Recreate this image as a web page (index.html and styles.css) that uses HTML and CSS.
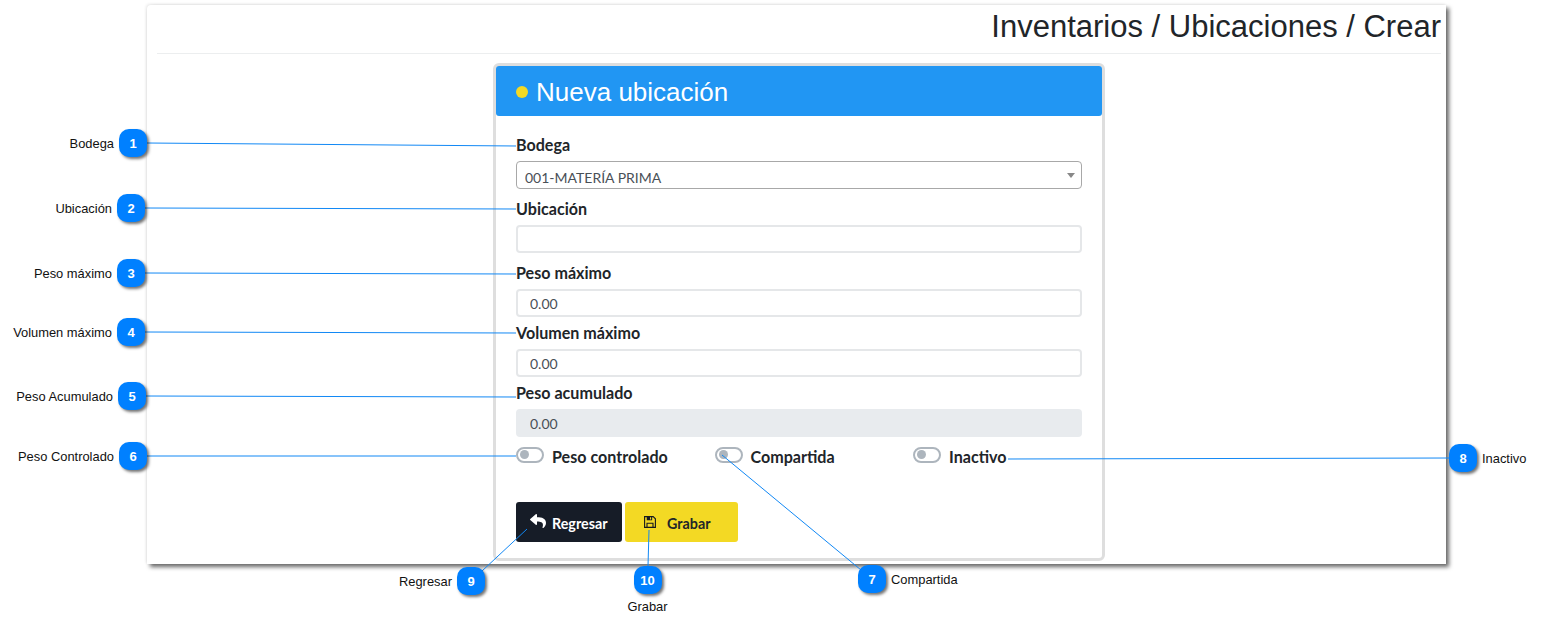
FILE: index.html
```html
<!DOCTYPE html>
<html lang="es">
<head>
<meta charset="utf-8">
<title>Inventarios / Ubicaciones / Crear</title>
<link rel="stylesheet" href="styles.css">
</head>
<body>
<main class="shot">
  <h1 class="page-title">Inventarios / Ubicaciones / Crear</h1>
  <hr class="rule">
  <form class="card">
    <header class="card-head"><span class="dot"></span><h2>Nueva ubicación</h2></header>
    <div class="card-body">
      <div class="field wide">
        <label>Bodega</label>
        <div class="select-wrap"><select><option>001-MATERÍA PRIMA</option></select></div>
      </div>
      <div class="field wide">
        <label>Ubicación</label>
        <input type="text">
      </div>
      <div class="field">
        <label>Peso máximo</label>
        <input type="text" value="0.00">
      </div>
      <div class="field">
        <label>Volumen máximo</label>
        <input type="text" value="0.00">
      </div>
      <div class="field">
        <label>Peso acumulado</label>
        <input type="text" value="0.00" disabled>
      </div>
      <div class="toggles">
        <div class="toggle"><span class="switch"></span><span>Peso controlado</span></div>
        <div class="toggle"><span class="switch"></span><span>Compartida</span></div>
        <div class="toggle"><span class="switch"></span><span>Inactivo</span></div>
      </div>
      <div class="actions">
        <button type="button" class="btn btn-dark">
          <svg class="ico-reply" viewBox="0 0 512 512"><path fill="#fff" d="M8.3 189.8 184.3 37.8C199.7 24.5 224 35.3 224 56v80.1c160.6 1.8 288 34 288 186.3 0 61.5-39.6 122.4-83.4 154.2-13.7 9.9-33.1-2.5-28.1-18.6 45.4-145.2-21.5-183.7-176.5-186V360c0 20.7-24.3 31.500-39.700 18.200L8.300 226.200c-11.100-9.600-11.100-26.800 0-36.400z"/></svg>
          Regresar
        </button>
        <button type="button" class="btn btn-yellow">
          <svg class="ico-save" viewBox="0 0 14 14"><path fill="none" stroke="#16191f" stroke-width="1.300" d="M.7.7h10l2.600 2.600v10H.7z"/><path fill="none" stroke="#16191f" stroke-width="1.300" d="M3.500 13.300V8.500h7v4.800"/><path fill="#16191f" d="M3.200.7h6.300v4.300H3.200z"/><path fill="#f3d924" d="M7 1.600h1.300v2.500H7z"/></svg>
          Grabar
        </button>
      </div>
    </div>
  </form>
</main>

<svg class="leaders" viewBox="0 0 1541 631">
  <line x1="147" y1="143" x2="516" y2="146"/>
  <line x1="145" y1="208" x2="516" y2="209"/>
  <line x1="145" y1="273" x2="516" y2="274"/>
  <line x1="145" y1="332" x2="516" y2="333"/>
  <line x1="146" y1="396" x2="516" y2="397"/>
  <line x1="147" y1="456" x2="516" y2="456"/>
  <line x1="722" y1="455" x2="861" y2="570"/>
  <line x1="1008" y1="459" x2="1449" y2="458"/>
  <line x1="527" y1="529" x2="482" y2="571"/>
  <line x1="649" y1="530" x2="648" y2="566"/>
</svg>

<div class="callout c1"><span>Bodega</span><b>1</b></div>
<div class="callout c2"><span>Ubicación</span><b>2</b></div>
<div class="callout c3"><span>Peso máximo</span><b>3</b></div>
<div class="callout c4"><span>Volumen máximo</span><b>4</b></div>
<div class="callout c5"><span>Peso Acumulado</span><b>5</b></div>
<div class="callout c6"><span>Peso Controlado</span><b>6</b></div>
<div class="callout c7"><b>7</b><span>Compartida</span></div>
<div class="callout c8"><b>8</b><span>Inactivo</span></div>
<div class="callout c9"><span>Regresar</span><b>9</b></div>
<div class="callout c10"><b>10</b><span>Grabar</span></div>
</body>
</html>
```
FILE: styles.css
```css
* { box-sizing: border-box; }
html, body { margin: 0; height: 631px; overflow: hidden; background: #fff; }
body { position: relative; font-family: "Lato", "Liberation Sans", sans-serif; color: #212529; }

.shot {
  width: 1299px; height: 559px; margin: 5px 0 0 147px;
  padding: 0 5px 0 10px; background: #fff;
  border-radius: 4px 0 0 0;
  box-shadow: 3px 3px 4px rgba(0,0,0,.6), -1px -1px 3px rgba(0,0,0,.09);
  display: flow-root;
}
.page-title {
  margin: 0; padding-top: 3px; height: 48px; text-align: right;
  font: 400 31px/37px "Liberation Sans", Arial, sans-serif; color: #212529;
}
.rule { margin: 0 0 9px; border: 0; border-top: 1px solid #eceeef; }

.card {
  width: 612px; height: 498px; margin-left: 336px;
  border: 3px solid #dedede; border-radius: 6px; background: #fff;
}
.card-head {
  height: 50px; padding: 2px 0 0 20px; background: #2196f3; border-radius: 3px;
  display: flex; align-items: center; gap: 8px; color: #fff;
}
.card-head h2 { margin: 0; font: 400 26px/1 "Liberation Sans", Arial, sans-serif; }
.dot { width: 12px; height: 12px; border-radius: 50%; background: #f3d924; margin-top: -1px; }
.card-body { padding: 18px 20px 0; width: 606px; }

.field { margin-bottom: 5px; }
.field.wide { margin-bottom: 9px; }
.field label { display: block; height: 22px; margin-bottom: 5px; font-size: 16.100px; font-weight: 700; line-height: 22px; color: #212529; }
.field input, .field select {
  display: block; width: 100%; height: 28px; border-radius: 4px; background: #fff;
  font: 400 14px "Lato", sans-serif; color: #495057; outline: 0;
}
.field input { border: 2px solid #e5e7e9; padding: 1px 12px 0; }
.field input:disabled { background: #e8ebee; border-color: #e8ebee; }
.select-wrap { position: relative; }
.select-wrap::after {
  content: ""; position: absolute; right: 7px; top: 12px;
  border: 4px solid transparent; border-top: 5px solid #888; border-bottom: 0;
}
.field select { appearance: none; -webkit-appearance: none; border: 1px solid #a8a8a8; padding: 4px 8px 0; }

.toggles { display: grid; grid-template-columns: repeat(3, 198.500px); margin-top: -6px; height: 40px; }
.toggle { display: flex; align-items: center; gap: 8px; height: 40px; font-size: 16.100px; font-weight: 700; }
.switch {
  position: relative; width: 28px; height: 16px; margin-top: -2px; border: 2.500px solid #adb5bd; border-radius: 8px; background: #fff;
}
.switch::after {
  content: ""; position: absolute; left: 2px; top: 1px; width: 9px; height: 9px; border-radius: 50%; background: #adb5bd;
}

.actions { display: flex; gap: 3px; margin-top: 26px; }
.btn {
  display: flex; align-items: center; height: 40px; border: 0; border-radius: 3px;
  padding-top: 4px; font: 700 14.300px "Lato", sans-serif;
}
.btn-dark { width: 106px; padding-left: 14px; padding-right: 0; gap: 6px; background: #161c27; color: #fff; }
.btn-yellow { width: 113px; padding-left: 19px; padding-right: 0; gap: 11px; background: #f3d924; color: #212529; }
.ico-reply { width: 16px; height: 16px; margin-top: -6px; }
.ico-save { width: 12px; height: 12px; margin-top: -4px; }

.leaders { position: absolute; left: 0; top: 0; width: 1541px; height: 631px; pointer-events: none; }
.leaders line { stroke: #1188f5; stroke-width: 1; }

.callout { position: absolute; display: flex; align-items: center; gap: 5px; font: 12.900px "Liberation Sans", Arial, sans-serif; color: #111; white-space: nowrap; }
.callout b {
  flex: none; width: 28px; height: 28px; border-radius: 10px; background: #0080ff; color: #fff;
  display: flex; align-items: center; justify-content: center;
  font: 700 13px "Liberation Sans", Arial, sans-serif;
  box-shadow: 2px 2px 3px rgba(0,0,0,.55);
}
.c1 { right: 1394px; top: 129px; }
.c2 { right: 1396px; top: 194px; }
.c3 { right: 1396px; top: 259px; }
.c4 { right: 1396px; top: 318px; }
.c5 { right: 1395px; top: 382px; }
.c6 { right: 1394px; top: 442px; }
.c7 { left: 858px; top: 565px; }
.c8 { left: 1449px; top: 444px; }
.c9 { right: 1056px; top: 567px; }
.c10 { left: 628px; top: 566px; width: 39px; flex-direction: column; gap: 5px; }
```
